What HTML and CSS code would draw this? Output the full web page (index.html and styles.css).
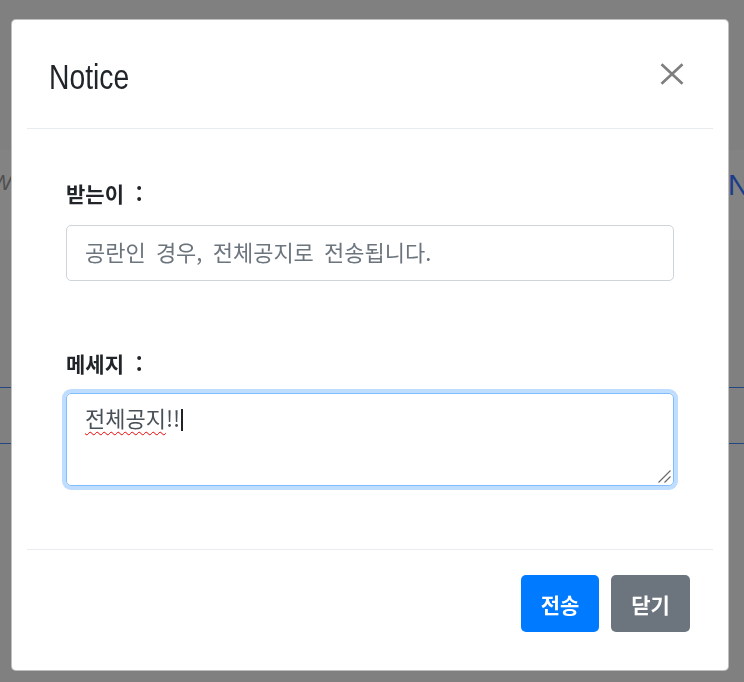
FILE: index.html
```html
<!DOCTYPE html>
<html lang="ko">
<head>
<meta charset="utf-8">
<title>Notice</title>
<link rel="stylesheet" href="styles.css">
</head>
<body>
<div class="bg-page">
  <div class="bg-band">
    <span class="bg-left">W</span>
    <span class="bg-right">N</span>
  </div>
  <div class="bg-table"></div>
</div>

<div class="modal">
  <div class="modal-dialog">
    <div class="modal-content">
      <div class="modal-header">
        <h5 class="modal-title">Notice</h5>
        <button class="close" type="button" aria-label="Close">
          <svg width="24" height="22" viewBox="0 0 24 22"><path d="M1.5 1.2 L22.5 20.8 M22.5 1.2 L1.5 20.8" stroke="#7f7f7f" stroke-width="2.7" fill="none"/></svg>
        </button>
      </div>
      <div class="modal-body">
        <label class="field-label first">받는이 &nbsp;:</label>
        <input class="form-control" type="text" placeholder="공란인 경우, 전체공지로 전송됩니다.">
        <label class="field-label second">메세지 &nbsp;:</label>
        <div class="textarea focused" role="textbox">
          <span class="misspelled">전체공지</span>!!<span class="caret"></span>
          <svg class="grip" width="13" height="13" viewBox="0 0 13 13"><path d="M0.5 12.5 L12.5 0.5 M6.5 12.5 L12.5 6.5" stroke="#6a6a6a" stroke-width="1.2" fill="none"/></svg>
        </div>
      </div>
      <div class="modal-footer">
        <button class="btn btn-primary" type="button">전송</button>
        <button class="btn btn-secondary" type="button">닫기</button>
      </div>
    </div>
  </div>
</div>
</body>
</html>
```

FILE: styles.css
```css
html, body {
  margin: 0;
  padding: 0;
}
body {
  background: #808080;
  overflow: hidden;
  width: 744px;
  height: 682px;
  font-family: "Noto Sans CJK KR", "Liberation Sans", sans-serif;
}

/* background page behind the backdrop */
.bg-page {
  padding-top: 150px;
}
.bg-band {
  height: 90px;
  background: #838383;
  display: flex;
  justify-content: space-between;
  align-items: flex-start;
  padding-top: 20px;
  box-sizing: border-box;
}
.bg-left {
  font-family: "Liberation Sans", sans-serif;
  font-style: italic;
  font-size: 22px;
  color: #505050;
  margin-left: -9px;
  line-height: 26px;
}
.bg-right {
  font-family: "Liberation Sans", sans-serif;
  font-size: 29px;
  color: #1b3c8a;
  margin-right: -5px;
  line-height: 30px;
}
.bg-table {
  margin-top: 147px;
  height: 55px;
  border-top: 1px solid #24477f;
  border-bottom: 1px solid #24477f;
}

/* modal */
.modal {
  position: fixed;
  top: 0;
  left: 0;
  right: 0;
  bottom: 0;
}
.modal-dialog {
  margin: 19px 0 0 11px;
  width: 718px;
}
.modal-content {
  box-sizing: border-box;
  height: 652px;
  background: #fff;
  border: 1px solid rgba(0, 0, 0, 0.25);
  border-radius: 5px;
  display: flex;
  flex-direction: column;
}
.modal-header {
  box-sizing: border-box;
  height: 109px;
  margin: 0 15px;
  padding: 0 29px 0 22px;
  border-bottom: 1px solid #e9ecef;
  display: flex;
  align-items: center;
  justify-content: space-between;
}
.modal-title {
  margin: 0;
  padding-top: 8px;
  font-family: "Liberation Sans", sans-serif;
  font-weight: normal;
  font-size: 34.5px;
  line-height: 1.2;
  color: #212529;
  transform: scaleX(0.82);
  transform-origin: left center;
}
.close {
  border: 0;
  background: transparent;
  padding: 0;
  width: 24px;
  height: 22px;
  display: flex;
}

.modal-body {
  margin: 0 15px;
  padding: 49px 39px 63px;
  display: flex;
  flex-direction: column;
}
.field-label {
  display: block;
  font-size: 21px;
  line-height: 30px;
  font-weight: 700;
  color: #212529;
}
.field-label.first {
  margin-bottom: 17px;
}
.field-label.second {
  margin-top: 67px;
  margin-bottom: 15px;
}
.form-control {
  box-sizing: border-box;
  width: 100%;
  height: 56px;
  margin: 0;
  padding: 0 18px 4px;
  border: 1px solid #ced4da;
  border-radius: 5px;
  font-family: "Noto Sans CJK KR", sans-serif;
  font-size: 22px;
  word-spacing: 4px;
  color: #495057;
  background: #fff;
  outline: none;
}
.form-control::placeholder {
  color: #6c757d;
  opacity: 1;
}
.textarea {
  position: relative;
  box-sizing: border-box;
  height: 93px;
  padding: 8px 18px;
  border: 1px solid #ced4da;
  border-radius: 5px;
  font-size: 22px;
  line-height: 31px;
  color: #495057;
}
.textarea.focused {
  border-color: #80bdff;
  box-shadow: 0 0 0 4px rgba(0, 123, 255, 0.25);
}
.misspelled {
  text-decoration: underline wavy #f00000;
  text-decoration-thickness: 1px;
  text-underline-offset: 4px;
}
.caret {
  display: inline-block;
  width: 1.5px;
  height: 22px;
  background: #222;
  margin-left: 1px;
  vertical-align: -4px;
}
.grip {
  position: absolute;
  right: 2px;
  bottom: 2px;
}

.modal-footer {
  margin: 0 15px;
  padding: 25px 23px 38px;
  border-top: 1px solid #e9ecef;
  display: flex;
  justify-content: flex-end;
  gap: 12px;
}
.btn {
  height: 57px;
  min-width: 78px;
  padding: 0 18px;
  border: 0;
  border-radius: 5px;
  font-family: "Noto Sans CJK KR", sans-serif;
  font-size: 21px;
  font-weight: 700;
  color: #fff;
  display: flex;
  align-items: center;
  justify-content: center;
}
.btn-primary {
  background: #007bff;
}
.btn-secondary {
  background: #6c757d;
  min-width: 79px;
}
```
